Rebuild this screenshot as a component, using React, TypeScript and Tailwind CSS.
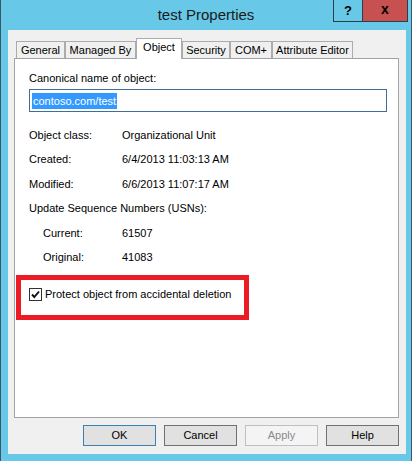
const TABS = [
  { label: "General", w: "w-[49px]" },
  { label: "Managed By", w: "w-[71px]" },
  { label: "Object", w: "w-[46px]", active: true },
  { label: "Security", w: "w-[48px]" },
  { label: "COM+", w: "w-[42px]" },
  { label: "Attribute Editor", w: "w-[81px]" },
];

const FONT = "font-['Liberation_Sans','Arial',sans-serif]";

function Row({ label, value, indent, mt }: { label: string; value: string; indent?: boolean; mt: string }) {
  return (
    <div className={`flex h-[13px] leading-[13px] ml-[14px] ${mt}`}>
      <span className={indent ? "w-[93px] pl-[14px]" : "w-[93px]"}>{label}</span>
      <span>{value}</span>
    </div>
  );
}

export default function App() {
  return (
    <div
      className={`w-[412px] h-[461px] flex flex-col bg-[#68c8e8] border-l border-r border-[#3b5767] text-[11px] text-black ${FONT}`}
    >
      {/* title bar */}
      <div className="relative h-[30px] shrink-0 flex items-center justify-center">
        <span className="text-[15px] text-[#1a1a1a] mt-[1px]">test Properties</span>
        <div className="absolute top-0 left-[332px] flex">
          <div className="w-[29px] h-[22px] border-l border-b border-[#2d3e48] flex items-center justify-center font-bold text-[13px] leading-none pb-[1px]">
            ?
          </div>
          <div className="w-[46px] h-[22px] bg-[#c75050] border-l border-r border-b border-[#2d3e48] flex items-center justify-center font-bold text-[14px] leading-none pb-[3px]">
            x
          </div>
        </div>
      </div>

      {/* client */}
      <div className="ml-[7px] mr-[5px] h-[424px] shrink-0 bg-[#f0f0f0] pt-[8px] flex flex-col">
        {/* tabs */}
        <div className="flex items-end h-[20px] pl-[8px] relative z-10">
          {TABS.map((t) =>
            t.active ? (
              <div
                key={t.label}
                className={`${t.w} h-[21px] -mb-[1px] bg-white border border-b-0 border-[#acacac] flex justify-center pt-[2px] leading-[13px]`}
              >
                {t.label}
              </div>
            ) : (
              <div
                key={t.label}
                className={`${t.w} h-[17px] bg-[#f0f0f0] border border-b-0 border-[#acacac] flex justify-center pt-[2px] leading-[13px]`}
              >
                {t.label}
              </div>
            )
          )}
        </div>

        {/* panel */}
        <div className="ml-[6px] mr-[7px] h-[360px] bg-white border border-[#a3a3a3] pt-[13px] flex flex-col">
          <div className="h-[13px] leading-[13px] ml-[14px]">Canonical name of object:</div>
          <div className="ml-[14px] mt-[4px] w-[358px] h-[23px] border border-[#3d6d98] flex items-center pl-[2px]">
            <span className="bg-[#3399ff] text-white h-[16px] leading-[16px] px-[1px]">contoso.com/test</span>
          </div>
          <Row label="Object class:" value="Organizational Unit" mt="mt-[17px]" />
          <Row label="Created:" value="6/4/2013 11:03:13 AM" mt="mt-[11px]" />
          <Row label="Modified:" value="6/6/2013 11:07:17 AM" mt="mt-[12px]" />
          <div className="h-[13px] leading-[13px] ml-[14px] mt-[11px]">Update Sequence Numbers (USNs):</div>
          <Row label="Current:" value="61507" indent mt="mt-[12px]" />
          <Row label="Original:" value="41083" indent mt="mt-[11px]" />

          <div className="ml-[1px] mt-[11px] w-[233px] h-[45px] border-[5px] border-[#ed1c24] flex items-start pt-[8px] pl-[8px]">
            <div className="w-[13px] h-[13px] border border-[#333333] bg-white flex items-center justify-center">
              <svg viewBox="0 0 11 11" className="w-[11px] h-[11px]">
                <polyline points="2,5.5 4.3,8 9,2.5" fill="none" stroke="#111" strokeWidth="1.9" />
              </svg>
            </div>
            <span className="ml-[3px] h-[13px] leading-[13px]">Protect object from accidental deletion</span>
          </div>
        </div>

        {/* buttons */}
        <div className="flex justify-end gap-[8px] mt-[7px] mr-[7px]">
          <button className="w-[73px] h-[21px] bg-[#e1e1e1] border border-[#3c7fb1] leading-none">OK</button>
          <button className="w-[73px] h-[21px] bg-[#e1e1e1] border border-[#707070] leading-none">Cancel</button>
          <button className="w-[73px] h-[21px] bg-[#f4f4f4] border border-[#bfbfbf] text-[#8a8a8a] leading-none">
            Apply
          </button>
          <button className="w-[73px] h-[21px] bg-[#e1e1e1] border border-[#707070] leading-none">Help</button>
        </div>
      </div>
    </div>
  );
}
